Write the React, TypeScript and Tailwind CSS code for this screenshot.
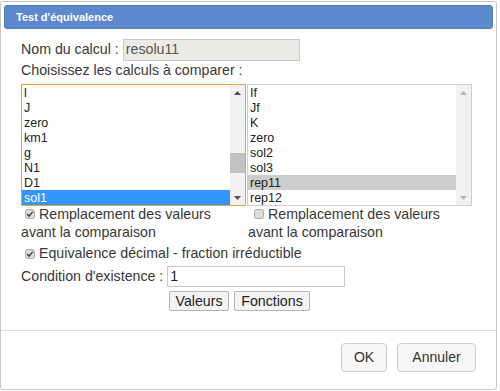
function Arrow({ dir, light }: { dir: "up" | "down"; light?: boolean }) {
  const color = light ? "#b8b8b8" : "#505050";
  return (
    <svg width="7" height="4" viewBox="0 0 7 4">
      {dir === "up" ? (
        <path d="M0 4 L3.5 0 L7 4 Z" fill={color} />
      ) : (
        <path d="M0 0 L3.5 4 L7 0 Z" fill={color} />
      )}
    </svg>
  );
}

function ListBox({
  items,
  selected,
  active,
  thumb,
}: {
  items: string[];
  selected: string;
  active?: boolean;
  thumb?: boolean;
}) {
  return (
    <div
      className={`flex h-[122px] w-[225px] border ${
        active ? "border-[#e7a438]" : "border-[#cfcfcf]"
      } bg-white`}
    >
      <div className="flex flex-1 flex-col">
        {items.map((it) => (
          <div
            key={it}
            className={`h-[15px] pl-[2px] text-[12.5px] leading-[16px] ${
              it === selected
                ? active
                  ? "bg-[#3396fe] text-white"
                  : "bg-[#cdcdcd] text-[#222]"
                : "text-[#222]"
            }`}
          >
            {it}
          </div>
        ))}
      </div>
      <div className="flex w-[15px] flex-col bg-[#f1f1f1]">
        <div className="flex h-[15px] items-center justify-center">
          <Arrow dir="up" light={!active} />
        </div>
        <div className="flex-1">
          {thumb && <div className="mt-[53px] h-[20px] bg-[#c1c1c1]" />}
        </div>
        <div className="flex h-[15px] items-center justify-center">
          <Arrow dir="down" light={!active} />
        </div>
      </div>
    </div>
  );
}

function Check({ checked }: { checked?: boolean }) {
  return (
    <svg width="10" height="10" viewBox="0 0 10 10" className="shrink-0">
      <rect x="0.5" y="0.5" width="9" height="9" rx="2" fill="#dcdcdc" stroke="#ababab" />
      {checked && (
        <path d="M2.2 5 L4.1 7.2 L7.8 2.6" fill="none" stroke="#444" strokeWidth="1.5" />
      )}
    </svg>
  );
}

export default function App() {
  const left = ["l", "J", "zero", "km1", "g", "N1", "D1", "sol1"];
  const right = ["If", "Jf", "K", "zero", "sol2", "sol3", "rep11", "rep12"];
  return (
    <div className="h-[391px] w-[500px] bg-white pt-[1px] font-['Liberation_Sans',Arial,sans-serif] text-[14.2px] text-[#383838]">
      <div className="flex h-[389px] w-[497px] flex-col rounded-[3px] border border-[#c8c8c8] p-[3px]">
        <div className="flex h-[24px] items-center rounded-[3px] border border-[#4f7dc2] bg-[#5c89cd] pl-[11px] text-[11px] font-bold text-white">
          Test d'équivalence
        </div>

        <div className="flex flex-col pl-[17px] pt-[10px]">
          <div className="flex h-[22px] items-center">
            <span>Nom du calcul :</span>
            <div className="ml-[4px] flex h-[22px] w-[177px] items-center border border-[#c9c9c9] bg-[#ebebe4] pl-[2px] text-[#555]">
              resolu11
            </div>
          </div>
          <div className="h-[18px] leading-[18px]">Choisissez les calculs à comparer :</div>

          <div className="mt-[5px] flex gap-[1px]">
            <ListBox items={left} selected="sol1" active thumb />
            <ListBox items={right} selected="rep11" />
          </div>

          <div className="mt-[-1px] flex">
            <div className="w-[227px] leading-[18px]">
              <div className="flex h-[18px] items-center">
                <span className="ml-[4px] mr-[4px]">
                  <Check checked />
                </span>
                Remplacement des valeurs
              </div>
              <div className="h-[18px]">avant la comparaison</div>
            </div>
            <div className="leading-[18px]">
              <div className="flex h-[18px] items-center">
                <span className="ml-[6px] mr-[4px]">
                  <Check />
                </span>
                Remplacement des valeurs
              </div>
              <div className="h-[18px]">avant la comparaison</div>
            </div>
          </div>

          <div className="mt-[4px] flex h-[18px] items-center">
            <span className="ml-[4px] mr-[4px]">
              <Check checked />
            </span>
            Equivalence décimal - fraction irréductible
          </div>

          <div className="mt-[3px] flex h-[21px] items-center">
            <span>Condition d'existence :</span>
            <div className="ml-[4px] flex h-[21px] w-[178px] items-center border border-[#c9c9c9] bg-white pl-[2px] text-[#222]">
              1
            </div>
          </div>

          <div className="mt-[4px] flex gap-[5px] pl-[148px]">
            <button className="h-[20px] w-[60px] rounded-[2px] border border-[#b5b5b5] bg-[#f3f3f3] leading-[18px] text-[#222]">
              Valeurs
            </button>
            <button className="h-[20px] w-[76px] rounded-[2px] border border-[#b5b5b5] bg-[#f3f3f3] leading-[18px] text-[#222]">
              Fonctions
            </button>
          </div>
        </div>

        <div className="mx-[-3px] mt-auto border-t border-[#dcdcdc]">
          <div className="flex justify-end gap-[10px] pb-[14px] pr-[20px] pt-[12px]">
            <button className="h-[29px] w-[46px] rounded-[4px] border border-[#cfcfcf] bg-[#f6f6f6] text-[14px] text-[#333]">
              OK
            </button>
            <button className="h-[29px] w-[79px] rounded-[4px] border border-[#cfcfcf] bg-[#f6f6f6] text-[14px] text-[#333]">
              Annuler
            </button>
          </div>
        </div>
      </div>
    </div>
  );
}
